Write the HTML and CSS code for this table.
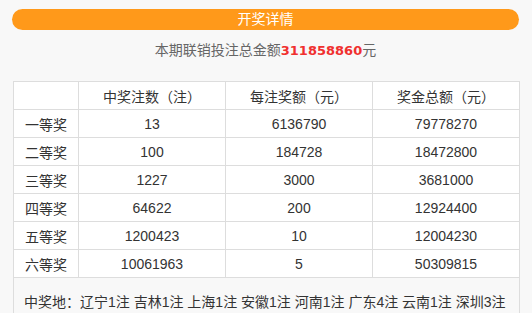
FILE: index.html
```html
<!DOCTYPE html>
<html lang="zh-CN">
<head>
<meta charset="utf-8">
<title>开奖详情</title>
<link rel="stylesheet" href="styles.css">
</head>
<body>
<div class="wrap">
  <div class="bar">开奖详情</div>
  <p class="total">本期联销投注总金额<span class="amount">311858860</span>元</p>
  <table class="prize">
    <thead>
      <tr><th class="c-name"></th><th>中奖注数（注）</th><th>每注奖额（元）</th><th>奖金总额（元）</th></tr>
    </thead>
    <tbody>
      <tr><td>一等奖</td><td>13</td><td>6136790</td><td>79778270</td></tr>
      <tr><td>二等奖</td><td>100</td><td>184728</td><td>18472800</td></tr>
      <tr><td>三等奖</td><td>1227</td><td>3000</td><td>3681000</td></tr>
      <tr><td>四等奖</td><td>64622</td><td>200</td><td>12924400</td></tr>
      <tr><td>五等奖</td><td>1200423</td><td>10</td><td>12004230</td></tr>
      <tr><td>六等奖</td><td>10061963</td><td>5</td><td>50309815</td></tr>
      <tr class="foot"><td colspan="4">中奖地：辽宁1注 吉林1注 上海1注 安徽1注 河南1注 广东4注 云南1注 深圳3注</td></tr>
    </tbody>
  </table>
</div>
</body>
</html>
```
FILE: styles.css
```css
html, body {
  margin: 0;
  padding: 0;
  background: #f8f8f8;
}
body {
  font-family: "Liberation Sans", "Noto Sans CJK SC", sans-serif;
  color: #333;
  font-size: 14px;
}
.wrap {
  width: 507px;
  margin: 0 0 0 12px;
  padding-top: 9px;
}
.bar {
  height: 21px;
  line-height: 21px;
  border-radius: 11px;
  background: #ff991a;
  color: #fff;
  text-align: center;
  font-size: 14px;
}
.total {
  margin: 0;
  padding-top: 10px;
  height: 41px;
  line-height: 20px;
  text-align: center;
  color: #666;
  font-size: 14px;
}
.amount {
  color: #f0302f;
  font-weight: bold;
  font-family: "DejaVu Sans", sans-serif;
  font-size: 13px;
}
.prize {
  width: 507px;
  margin-left: 1px;
  border-collapse: collapse;
  background: #fff;
  table-layout: fixed;
}
.prize th, .prize td {
  border: 1px solid #ddd;
  height: 27px;
  padding: 0;
  text-align: center;
  font-weight: normal;
  font-size: 14px;
  color: #333;
}
.prize th.c-name { width: 64px; }
.prize tr.foot td {
  background: #f8f8f8;
  text-align: left;
  padding: 14px 0 14px 10px;
  height: auto;
  line-height: 20px;
  white-space: nowrap;
}
```
